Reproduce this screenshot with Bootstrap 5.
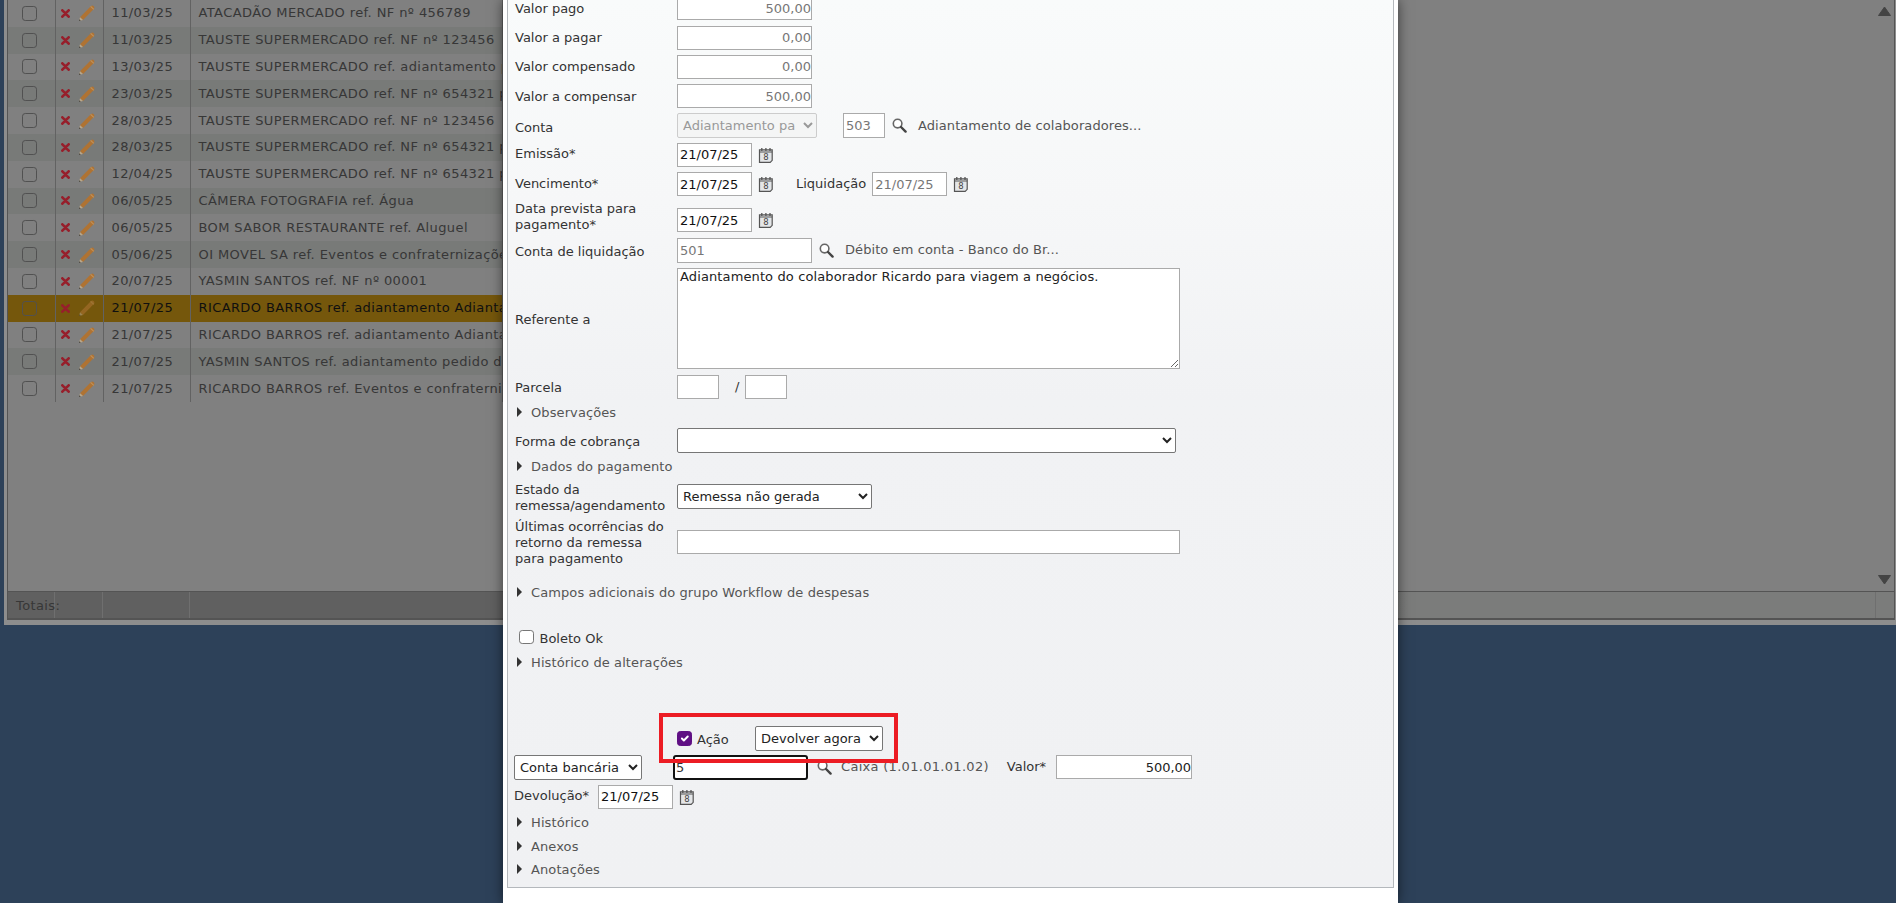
<!DOCTYPE html>
<html lang="pt-BR">
<head>
<meta charset="utf-8">
<title>Contas a pagar</title>
<link href="https://cdn.jsdelivr.net/npm/bootstrap@5.3.0/dist/css/bootstrap.min.css" rel="stylesheet">
<style>
html,body{height:903px;overflow:hidden}
body{background:#3d5777;font-family:"DejaVu Sans",sans-serif;font-size:13px;line-height:16px;color:#333}
.modal-backdrop.show{opacity:.25}
.lst-win{margin-left:4px;height:625px;background:#bcbcbc;padding:0 1px 5px 3px}
.lst-inner{height:620px;background:#ababab;border-right:1px solid #717171;border-left:1px solid #717171;border-bottom:2px solid #717171;display:flex;flex-direction:column;position:relative}
.lst-body{flex:1 1 auto;overflow:hidden}
.lst-table{width:495px;table-layout:fixed;margin:0;border-collapse:collapse}
.lst-table td{height:26.8px;padding:0 0 0 8px;border:0;border-right:1px solid #838383;vertical-align:middle;white-space:nowrap;overflow:hidden;background:#ababab;color:#4a4a4a;font-size:13px;letter-spacing:.4px;box-shadow:none}
.lst-table tr:nth-child(even) td{background:#a0a3a1}
.lst-table tr.hl td{background:#9c7410;color:#161616}
.lst-table tr.hl .ic-pen{opacity:.55}
.lst-table td.cc{padding:0 0 0 14px}
.lst-table td.ci{padding:0 0 0 5px}
.lst-chk{width:15px;height:15px;margin:0;border:1px solid #6c6c6c;border-radius:3px;display:block;background-color:transparent}
.lst-foot{height:27px;border-top:1px solid #717171;background:linear-gradient(90deg,#808080 0,#808080 500px,#a4a6a4 1400px);display:flex;flex:0 0 auto}
.lst-foot span{border-right:1px solid #949494;padding:6px 0 0 8px;color:#4a4a4a;white-space:nowrap;letter-spacing:.4px}
.f1{width:47px}.f2{width:48px}.f3{width:87px}.f4{flex:1}.f5{width:18px;border-right:0!important}
.sc-up,.sc-dn{position:absolute;right:3px;line-height:0}
.sc-up{top:6px}.sc-dn{bottom:33px}
.dlg{position:absolute;top:0;left:503px;width:895px;height:903px;background:#fff;z-index:1060;box-shadow:0 0 12px rgba(0,0,0,.55);padding:0 4px;overflow:hidden}
.dlg-panel{display:flow-root;height:888px;border:1px solid #b4b8bc;border-top:0;background:linear-gradient(#f9fbfb 0,#f6f7f8 200px,#f1f2f4 400px,#f0f1f3 100%);padding:0 7px;position:relative}
.frm-row{display:flex;align-items:center;padding:2.7px 0}
.frm-lbl{width:162px;flex:0 0 162px;line-height:16px;color:#333;margin-top:3px}
.lbl-val{margin-top:1px}
.lbl-up{margin-top:-1px}
.lbl-dn{margin-top:5px}
.lbl-2{margin:1px 0 -1px}
.txt-dn{margin-top:3px}
.fld{height:24px;border:1px solid #aaa;background:#fff;font:inherit;color:#777;padding:0 2px;border-radius:0;outline:0}
.fld-r{text-align:right;padding:0}
.w135{width:135px}.w75{width:75px}.w42{width:42px}.w503{width:503px}
.fld-dk{color:#111}
.sel{height:25px;border:1px solid #767676;border-radius:2px;background:#fff;font:inherit;color:#222;padding:0 0 0 1px}
.ic{flex:0 0 auto;display:block}
.ic-cal{margin-left:6px}
.ic-lup{margin-left:7px}
.dsc{color:#555;margin-left:11px;white-space:nowrap;letter-spacing:.08px}
.foldr{display:flex;align-items:center;color:#555;height:16px;line-height:16px;padding-top:2px;letter-spacing:.1px;box-sizing:border-box}
.foldr::before{content:"";width:0;height:0;border-top:5px solid transparent;border-bottom:5px solid transparent;border-left:5px solid #333;margin:-2px 9px 0 2px}
.boleto{display:flex;align-items:center;gap:6px}
.chk-plain{width:14.5px;height:14.5px;margin:0 0 0 4px;border:1px solid #767676;border-radius:3px}
.chk-act{width:15px;height:15px;margin:0;border-radius:3px}
.chk-act:checked{background-color:#5f0f84;border-color:#5f0f84}
.red-box{position:absolute;left:151px;top:713px;width:239px;height:50px;border:4px solid #ec1c24;z-index:2;pointer-events:none}
.acao{display:flex;align-items:center;margin-left:162px}
.focus5{width:135px;height:25px;border:2px solid #111;border-radius:3px;background:#fff;color:#333;padding:0 1px;font:inherit;outline:0}
.nw{white-space:nowrap}
</style>
</head>
<body>
<svg width="0" height="0" class="position-absolute">
<defs>
<symbol id="i-x" viewBox="0 0 10 10"><path d="M1.5 1.5 8.5 8.5M8.5 1.5 1.5 8.5" stroke="#c92a3a" stroke-width="3" stroke-linecap="round"/></symbol>
<symbol id="i-pen" viewBox="0 0 18 18"><path d="M2 13.2 12.8 2.2c1-1 2.2-.9 3 0s.8 2 0 2.9L5 16z" fill="#ea9a45"/><path d="M12.6 2.4l3.2 3" stroke="#ffc27a" stroke-width="1.2"/><path d="M2 13.2 1 17l4-1z" fill="#f7dfb8"/><path d="M1 17l.5-1.8 1.2 1.3z" fill="#444"/></symbol>
<symbol id="i-lup" viewBox="0 0 15 15"><circle cx="5.6" cy="5.6" r="4.3" fill="#fff" stroke="#666" stroke-width="1.6"/><path d="M9 9l4.6 4.6" stroke="#444" stroke-width="2.4" stroke-linecap="round"/></symbol>
<symbol id="i-cal" viewBox="0 0 16 16"><path d="M1.5 2.8h12.7v10.5l-2 2H1.5z" fill="#e4e6e8" stroke="#555" stroke-width="1.2"/><path d="M3.8 1v3M7.9 1v3M12 1v3" stroke="#555" stroke-width="1.3"/><path d="M1.5 5h12.7" stroke="#555"/><text x="7.9" y="13.4" font-size="8.5" text-anchor="middle" font-family="DejaVu Sans" fill="#444">8</text></symbol>
</defs>
</svg>

<div class="lst-win">
 <div class="lst-inner">
  <div class="lst-body">
   <table class="table lst-table">
    <colgroup><col style="width:47px"><col style="width:48px"><col style="width:87px"><col></colgroup>
    <tbody id="rows"></tbody>
   </table>
  </div>
  <div class="sc-up"><svg width="13" height="10" viewBox="0 0 13 10"><path d="M6.5 1 12.5 9.5H.5z" fill="#5b5b5b" stroke="#5b5b5b" stroke-linejoin="round"/></svg></div>
  <div class="sc-dn"><svg width="13" height="10" viewBox="0 0 13 10"><path d="M.5 .5h12L6.5 9z" fill="#5b5b5b" stroke="#5b5b5b" stroke-linejoin="round"/></svg></div>
  <div class="lst-foot"><span class="f1">Totais:</span><span class="f2"></span><span class="f3"></span><span class="f4"></span><span class="f5"></span></div>
 </div>
</div>

<div class="modal-backdrop show"></div>

<div class="dlg">
 <div class="dlg-panel">
  <form style="margin-top:-6.5px">
   <div class="frm-row"><div class="frm-lbl lbl-val">Valor pago</div><input class="fld fld-r w135" value="500,00"></div>
   <div class="frm-row"><div class="frm-lbl lbl-val">Valor a pagar</div><input class="fld fld-r w135" value="0,00"></div>
   <div class="frm-row"><div class="frm-lbl lbl-val">Valor compensado</div><input class="fld fld-r w135" value="0,00"></div>
   <div class="frm-row"><div class="frm-lbl lbl-val">Valor a compensar</div><input class="fld fld-r w135" value="500,00"></div>
   <div class="frm-row" style="padding:2px 0">
     <div class="frm-lbl lbl-dn">Conta</div>
     <select class="sel" disabled style="width:140px;border-color:#ccc;color:#999;background:#f4f5f5"><option>Adiantamento pa</option></select>
     <input class="fld" style="width:42px;margin-left:26px;height:25px" value="503">
     <svg class="ic ic-lup" width="15" height="15"><use href="#i-lup"/></svg>
     <span class="dsc">Adiantamento de colaboradores...</span>
   </div>
   <div class="frm-row"><div class="frm-lbl lbl-up">Emissão*</div><input class="fld fld-dk w75" value="21/07/25"><svg class="ic ic-cal" width="16" height="16"><use href="#i-cal"/></svg></div>
   <div class="frm-row">
     <div class="frm-lbl lbl-up">Vencimento*</div><input class="fld fld-dk w75" value="21/07/25"><svg class="ic ic-cal" width="16" height="16"><use href="#i-cal"/></svg>
     <span class="lbl-up" style="margin-left:22px;margin-right:6px">Liquidação</span><input class="fld w75" value="21/07/25"><svg class="ic ic-cal" width="16" height="16"><use href="#i-cal"/></svg>
   </div>
   <div class="frm-row" style="align-items:flex-end;padding:1.7px 0 2.7px"><div class="frm-lbl lbl-2">Data prevista para pagamento*</div><input class="fld fld-dk w75" value="21/07/25"><svg class="ic ic-cal" style="margin-bottom:4px" width="16" height="16"><use href="#i-cal"/></svg></div>
   <div class="frm-row"><div class="frm-lbl">Conta de liquidação</div><input class="fld w135" style="height:25px" value="501"><svg class="ic ic-lup" width="15" height="15"><use href="#i-lup"/></svg><span class="dsc">Débito em conta - Banco do Br...</span></div>
   <div class="frm-row"><div class="frm-lbl">Referente a</div><textarea class="fld fld-dk w503" style="height:101px;resize:both;color:#222;letter-spacing:.12px">Adiantamento do colaborador Ricardo para viagem a negócios.</textarea></div>
   <div class="frm-row"><div class="frm-lbl">Parcela</div><input class="fld w42"><span style="margin:0 6px 0 16px">/</span><input class="fld w42"></div>
   <div class="foldr" style="margin-top:2.5px">Observações</div>
   <div class="frm-row" style="margin-top:5.3px"><div class="frm-lbl">Forma de cobrança</div><select class="sel" style="width:499px"><option></option></select></div>
   <div class="foldr" style="margin-top:2.3px">Dados do pagamento</div>
   <div class="frm-row" style="margin-top:7px;padding:0"><div class="frm-lbl nw lbl-2">Estado da<br>remessa/agendamento</div><select class="sel" style="width:195px"><option>Remessa não gerada</option></select></div>
   <div class="frm-row" style="margin-top:5px;padding:0"><div class="frm-lbl nw lbl-2">Últimas ocorrências do<br>retorno da remessa<br>para pagamento</div><input class="fld w503"></div>
   <div class="foldr" style="margin-top:18px">Campos adicionais do grupo Workflow de despesas</div>
   <div class="boleto" style="margin-top:28px"><input type="checkbox" class="form-check-input chk-plain"><span class="txt-dn">Boleto Ok</span></div>
   <div class="foldr" style="margin-top:7px">Histórico de alterações</div>
   <div class="acao" style="margin-top:56px"><input type="checkbox" class="form-check-input chk-act" checked><span class="txt-dn" style="margin-left:5px;width:58px">Ação</span><select class="sel" style="width:128px"><option>Devolver agora</option></select></div>
   <div class="d-flex align-items-center" style="margin-top:4px">
     <select class="sel" style="width:128px;margin-left:-1px"><option>Conta bancária</option></select>
     <input class="focus5" style="margin-left:31px" value="5">
     <svg class="ic" style="margin-left:9px" width="15" height="15"><use href="#i-lup"/></svg>
     <span class="dsc" style="margin-left:9px;letter-spacing:.3px">Caixa (1.01.01.01.02)</span>
     <span style="margin-left:18px">Valor*</span>
     <input class="fld fld-r" style="width:136px;margin-left:10px;color:#222" value="500,00">
   </div>
   <div class="d-flex align-items-center" style="margin-top:5px">
     <span style="width:84px;margin-left:-1px" class="lbl-up">Devolução*</span><input class="fld fld-dk w75" value="21/07/25"><svg class="ic ic-cal" width="16" height="16"><use href="#i-cal"/></svg>
   </div>
   <div class="foldr" style="margin-top:5px">Histórico</div>
   <div class="foldr" style="margin-top:8px">Anexos</div>
   <div class="foldr" style="margin-top:7px">Anotações</div>
  </form>
  <div class="red-box"></div>
 </div>
</div>

<script src="https://cdn.jsdelivr.net/npm/bootstrap@5.3.0/dist/js/bootstrap.bundle.min.js"></script>
<script>
var d=[["11/03/25","ATACADÃO MERCADO ref. NF nº 456789"],["11/03/25","TAUSTE SUPERMERCADO ref. NF nº 123456"],["13/03/25","TAUSTE SUPERMERCADO ref. adiantamento p"],["23/03/25","TAUSTE SUPERMERCADO ref. NF nº 654321 p"],["28/03/25","TAUSTE SUPERMERCADO ref. NF nº 123456"],["28/03/25","TAUSTE SUPERMERCADO ref. NF nº 654321 p"],["12/04/25","TAUSTE SUPERMERCADO ref. NF nº 654321 p"],["06/05/25","CÂMERA FOTOGRAFIA ref. Água"],["06/05/25","BOM SABOR RESTAURANTE ref. Aluguel"],["05/06/25","OI MOVEL SA ref. Eventos e confraternizaçõe"],["20/07/25","YASMIN SANTOS ref. NF nº 00001"],["21/07/25","RICARDO BARROS ref. adiantamento Adianta"],["21/07/25","RICARDO BARROS ref. adiantamento Adianta"],["21/07/25","YASMIN SANTOS ref. adiantamento pedido de"],["21/07/25","RICARDO BARROS ref. Eventos e confraterniz"]];
document.getElementById('rows').innerHTML=d.map(function(r,i){return '<tr'+(i==11?' class="hl"':'')+'><td class="cc"><input type="checkbox" class="form-check-input lst-chk"></td><td class="ci"><span class="d-flex align-items-center"><svg width="9" height="9"><use href="#i-x"/></svg><svg class="ic-pen" width="18" height="18" style="margin-left:8px"><use href="#i-pen"/></svg></span></td><td>'+r[0]+'</td><td>'+r[1]+'</td></tr>'}).join('');
</script>
</body>
</html>
